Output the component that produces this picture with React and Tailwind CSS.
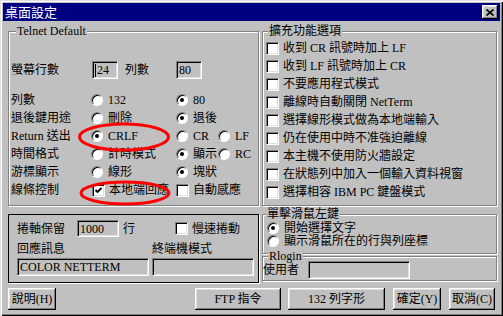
import React from "react";

const etched = "border border-[#808080] shadow-[inset_1px_1px_0_#fff,1px_1px_0_#fff]";
const sunken =
  "border border-[#808080] border-r-white border-b-white shadow-[inset_1px_1px_0_#000,inset_-1px_-1px_0_#dfdfdf]";
const raised =
  "shadow-[inset_-1px_-1px_0_#000,inset_1px_1px_0_#fff,inset_-2px_-2px_0_#808080,inset_2px_2px_0_#dfdfdf]";

function Radio({ checked }) {
  return (
    <div className="w-[12px] h-[12px] shrink-0 rounded-full bg-white border border-[#808080] border-r-white border-b-white shadow-[inset_1px_1px_0_#000] flex items-center justify-center">
      {checked && <div className="w-[4px] h-[4px] rounded-full bg-black" />}
    </div>
  );
}

function Check({ checked }) {
  return (
    <div className={`w-[13px] h-[13px] shrink-0 bg-white flex items-center justify-center ${sunken}`}>
      {checked && (
        <svg width="9" height="9" viewBox="0 0 9 9">
          <path d="M1.5 4 L3.5 6 L7.5 2" stroke="#000" strokeWidth="1.8" fill="none" />
        </svg>
      )}
    </div>
  );
}

function Label({ className = "", children }) {
  return (
    <div className={`self-start -mt-[7px] px-[1px] bg-[#c0c0c0] h-[12px] leading-[12px] whitespace-nowrap ${className}`}>
      {children}
    </div>
  );
}

function Field({ className = "", children }) {
  return (
    <div className={`bg-[#c0c0c0] flex items-center pl-[2px] leading-[12px] whitespace-nowrap ${sunken} ${className}`}>
      {children}
    </div>
  );
}

function RadioItem({ checked, children, w = "" }) {
  return (
    <div className={`flex items-center ${w}`}>
      <Radio checked={checked} />
      <span className="ml-[5px] whitespace-nowrap">{children}</span>
    </div>
  );
}

function CheckItem({ checked, children, w = "" }) {
  return (
    <div className={`flex items-center ${w}`}>
      <Check checked={checked} />
      <span className="ml-[4px] whitespace-nowrap">{children}</span>
    </div>
  );
}

function Button({ className = "", children }) {
  return (
    <div className={`h-[22px] bg-[#c0c0c0] flex items-center justify-center leading-[12px] whitespace-nowrap ${raised} ${className}`}>
      {children}
    </div>
  );
}

export default function App() {
  const leftRows = [
    ["列數", [[false, "132"], [true, "80"]]],
    ["退後鍵用途", [[false, "刪除"], [true, "退後"]]],
    ["Return 送出", [[true, "CRLF"], [false, "CR"], [false, "LF"]]],
    ["時間格式", [[false, "計時模式"], [true, "顯示"], [false, "RC"]]],
    ["游標顯示", [[false, "線形"], [true, "塊狀"]]],
  ];
  const colW = ["w-[85px]", "w-[42px]", ""];
  const opts = [
    "收到 CR 訊號時加上 LF",
    "收到 LF 訊號時加上 CR",
    "不要應用程式模式",
    "離線時自動關閉 NetTerm",
    "選擇線形模式做為本地端輸入",
    "仍在使用中時不准強迫離線",
    "本主機不使用防火牆設定",
    "在狀態列中加入一個輸入資料視窗",
    "選擇相容 IBM PC 鍵盤模式",
  ];

  return (
    <div className="relative w-[503px] h-[316px] bg-[#c0c0c0] p-[3px] flex flex-col text-[12px] leading-[12px] text-black font-['Liberation_Serif','Noto_Sans_CJK_TC',serif] shadow-[inset_1px_1px_0_#dfdfdf,inset_2px_2px_0_#fff,inset_-1px_-1px_0_#000,inset_-2px_-2px_0_#808080] overflow-hidden">
      {/* Title bar */}
      <div className="h-[18px] bg-[#000080] flex items-center pl-[2px] pr-[2px] shrink-0">
        <span className="text-white text-[13px] leading-[13px]">桌面設定</span>
        <div className={`ml-auto w-[16px] h-[14px] bg-[#c0c0c0] flex items-center justify-center ${raised}`}>
          <svg width="8" height="7" viewBox="0 0 8 7">
            <path d="M0.5 0.5 L7.5 6.5 M7.5 0.5 L0.5 6.5" stroke="#000" strokeWidth="1.6" fill="none" />
          </svg>
        </div>
      </div>

      {/* Body */}
      <div className="mt-[10px] pl-[5px] flex items-start">
        {/* Left column */}
        <div className="flex flex-col w-[251px]">
          <div className={`h-[175px] flex flex-col ${etched}`}>
            <Label className="ml-[7px]">Telnet Default</Label>
            <div className="mt-[24px] h-[18px] flex items-center pl-[2px]">
              <span className="w-[81px]">螢幕行數</span>
              <Field className="w-[26px] h-[18px]">
                <span className="w-[1px] h-[13px] bg-black mr-[1px]" />
                24
              </Field>
              <span className="ml-[7px] w-[51px]">列數</span>
              <Field className="w-[26px] h-[18px]">80</Field>
            </div>
            <div className="mt-[12px] flex flex-col pl-[2px]">
              {leftRows.map(([label, items]) => (
                <div key={label} className="h-[18px] flex items-center">
                  <span className="w-[80px] whitespace-nowrap">{label}</span>
                  {items.map(([c, t], i) => (
                    <RadioItem key={t} checked={c} w={colW[i]}>
                      {t}
                    </RadioItem>
                  ))}
                </div>
              ))}
              <div className="h-[18px] flex items-center">
                <span className="w-[81px]">線條控制</span>
                <CheckItem checked w="w-[84px]">
                  本地端回應
                </CheckItem>
                <CheckItem>自動感應</CheckItem>
              </div>
            </div>
          </div>

          <div className="mt-[8px] h-[69px] border border-black shadow-[1px_1px_0_#fff] flex flex-col pl-[8px]">
            <div className="mt-[5px] h-[17px] flex items-center">
              <span className="w-[60px]">捲軸保留</span>
              <Field className="w-[42px] h-[17px]">1000</Field>
              <span className="ml-[4px]">行</span>
              <div className="ml-[40px] flex items-center">
                <Check />
                <span className="ml-[4px]">慢速捲動</span>
              </div>
            </div>
            <div className="mt-[6px] h-[12px] flex items-center">
              <span className="w-[135px]">回應訊息</span>
              <span>終端機模式</span>
            </div>
            <div className="mt-[3px] flex gap-[3px]">
              <Field className="w-[132px] h-[18px]">COLOR NETTERM</Field>
              <Field className="w-[102px] h-[18px]" />
            </div>
          </div>
        </div>

        {/* Right column */}
        <div className="ml-[3px] flex flex-col w-[235px]">
          <div className={`h-[175px] flex flex-col ${etched}`}>
            <Label className="ml-[5px]">擴充功能選項</Label>
            <div className="mt-[2px] flex flex-col pl-[3px]">
              {opts.map((t) => (
                <div key={t} className="h-[18px] flex items-center">
                  <CheckItem>{t}</CheckItem>
                </div>
              ))}
            </div>
          </div>

          <div className={`mt-[8px] h-[40px] flex flex-col ${etched}`}>
            <Label className="ml-[3px]">單擊滑鼠左鍵</Label>
            <div className="mt-[1px] flex flex-col pl-[4px]">
              <div className="h-[13px] flex items-center">
                <RadioItem checked>開始選擇文字</RadioItem>
              </div>
              <div className="h-[13px] flex items-center">
                <RadioItem>顯示滑鼠所在的行與列座標</RadioItem>
              </div>
            </div>
          </div>

          <div className={`mt-[2px] h-[25px] flex flex-col ${etched}`}>
            <Label className="ml-[5px] relative">Rlogin</Label>
            <div className="-mt-[1px] h-[18px] flex items-center">
              <span className="w-[45px]">使用者</span>
              <Field className="w-[102px] h-[18px]" />
            </div>
          </div>
        </div>
      </div>

      {/* Buttons */}
      <div className="mt-[5px] pl-[5px] flex items-center">
        <Button className="w-[48px]">說明(H)</Button>
        <Button className="ml-[139px] w-[86px]">FTP 指令</Button>
        <Button className="ml-[7px] w-[97px]">132 列字形</Button>
        <Button className="ml-[8px] w-[48px]">確定(Y)</Button>
        <Button className="ml-[8px] w-[46px]">取消(C)</Button>
      </div>

      {/* Red annotation ellipses */}
      <svg className="absolute left-0 top-0 pointer-events-none" width="503" height="316" viewBox="0 0 503 316">
        <ellipse cx="124" cy="137" rx="44.5" ry="13" fill="none" stroke="#f00" strokeWidth="3" />
        <ellipse cx="125" cy="193" rx="44" ry="11" fill="none" stroke="#f00" strokeWidth="3" />
      </svg>
    </div>
  );
}
